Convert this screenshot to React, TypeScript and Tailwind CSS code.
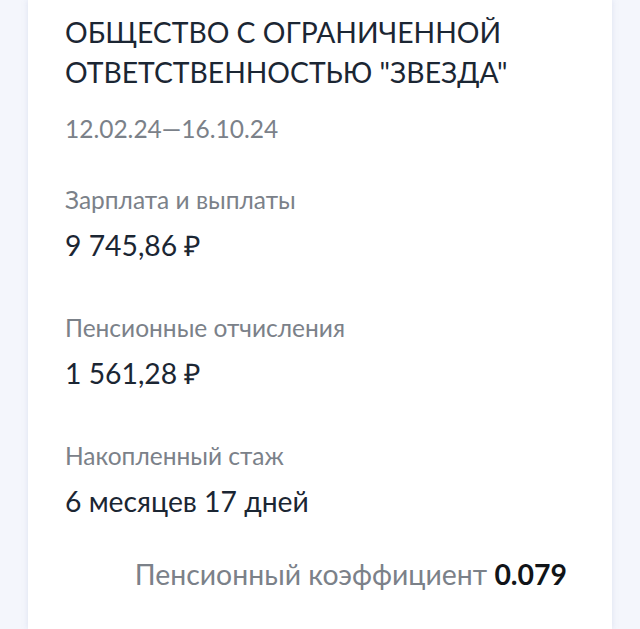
export default function App() {
  const rows = [
    { label: "Зарплата и выплаты", value: "9 745,86 ₽" },
    { label: "Пенсионные отчисления", value: "1 561,28 ₽" },
    { label: "Накопленный стаж", value: "6 месяцев 17 дней" },
  ];

  return (
    <div className="min-h-[629px] bg-[#f4f6fc] px-[28px] font-['Lato',sans-serif]">
      <div className="min-h-[629px] bg-white px-[37px] pt-3 shadow-[0_0_6px_rgba(150,165,205,0.25)]">
        <h1 className="text-[28.3px] leading-[40px] font-normal text-[#1b2633]">
          ОБЩЕСТВО С ОГРАНИЧЕННОЙ ОТВЕТСТВЕННОСТЬЮ "ЗВЕЗДА"
        </h1>
        <p className="mt-[21px] text-[24.5px] leading-[32px] text-[#7b8189]">12.02.24—16.10.24</p>
        <div className="mt-[39px] flex flex-col gap-[49px]">
          {rows.map((row) => (
            <div key={row.label} className="flex flex-col gap-[11px]">
              <span className="text-[24.5px] leading-[32px] text-[#7b8189]">{row.label}</span>
              <span className="text-[28.3px] leading-[36px] text-[#1b2633]">{row.value}</span>
            </div>
          ))}
        </div>
        <div className="mt-[37px] pr-[8px] text-right text-[28.4px] leading-[36px] text-[#7b8189]">
          Пенсионный коэффициент <span className="font-bold text-[#111418]">0.079</span>
        </div>
      </div>
    </div>
  );
}
